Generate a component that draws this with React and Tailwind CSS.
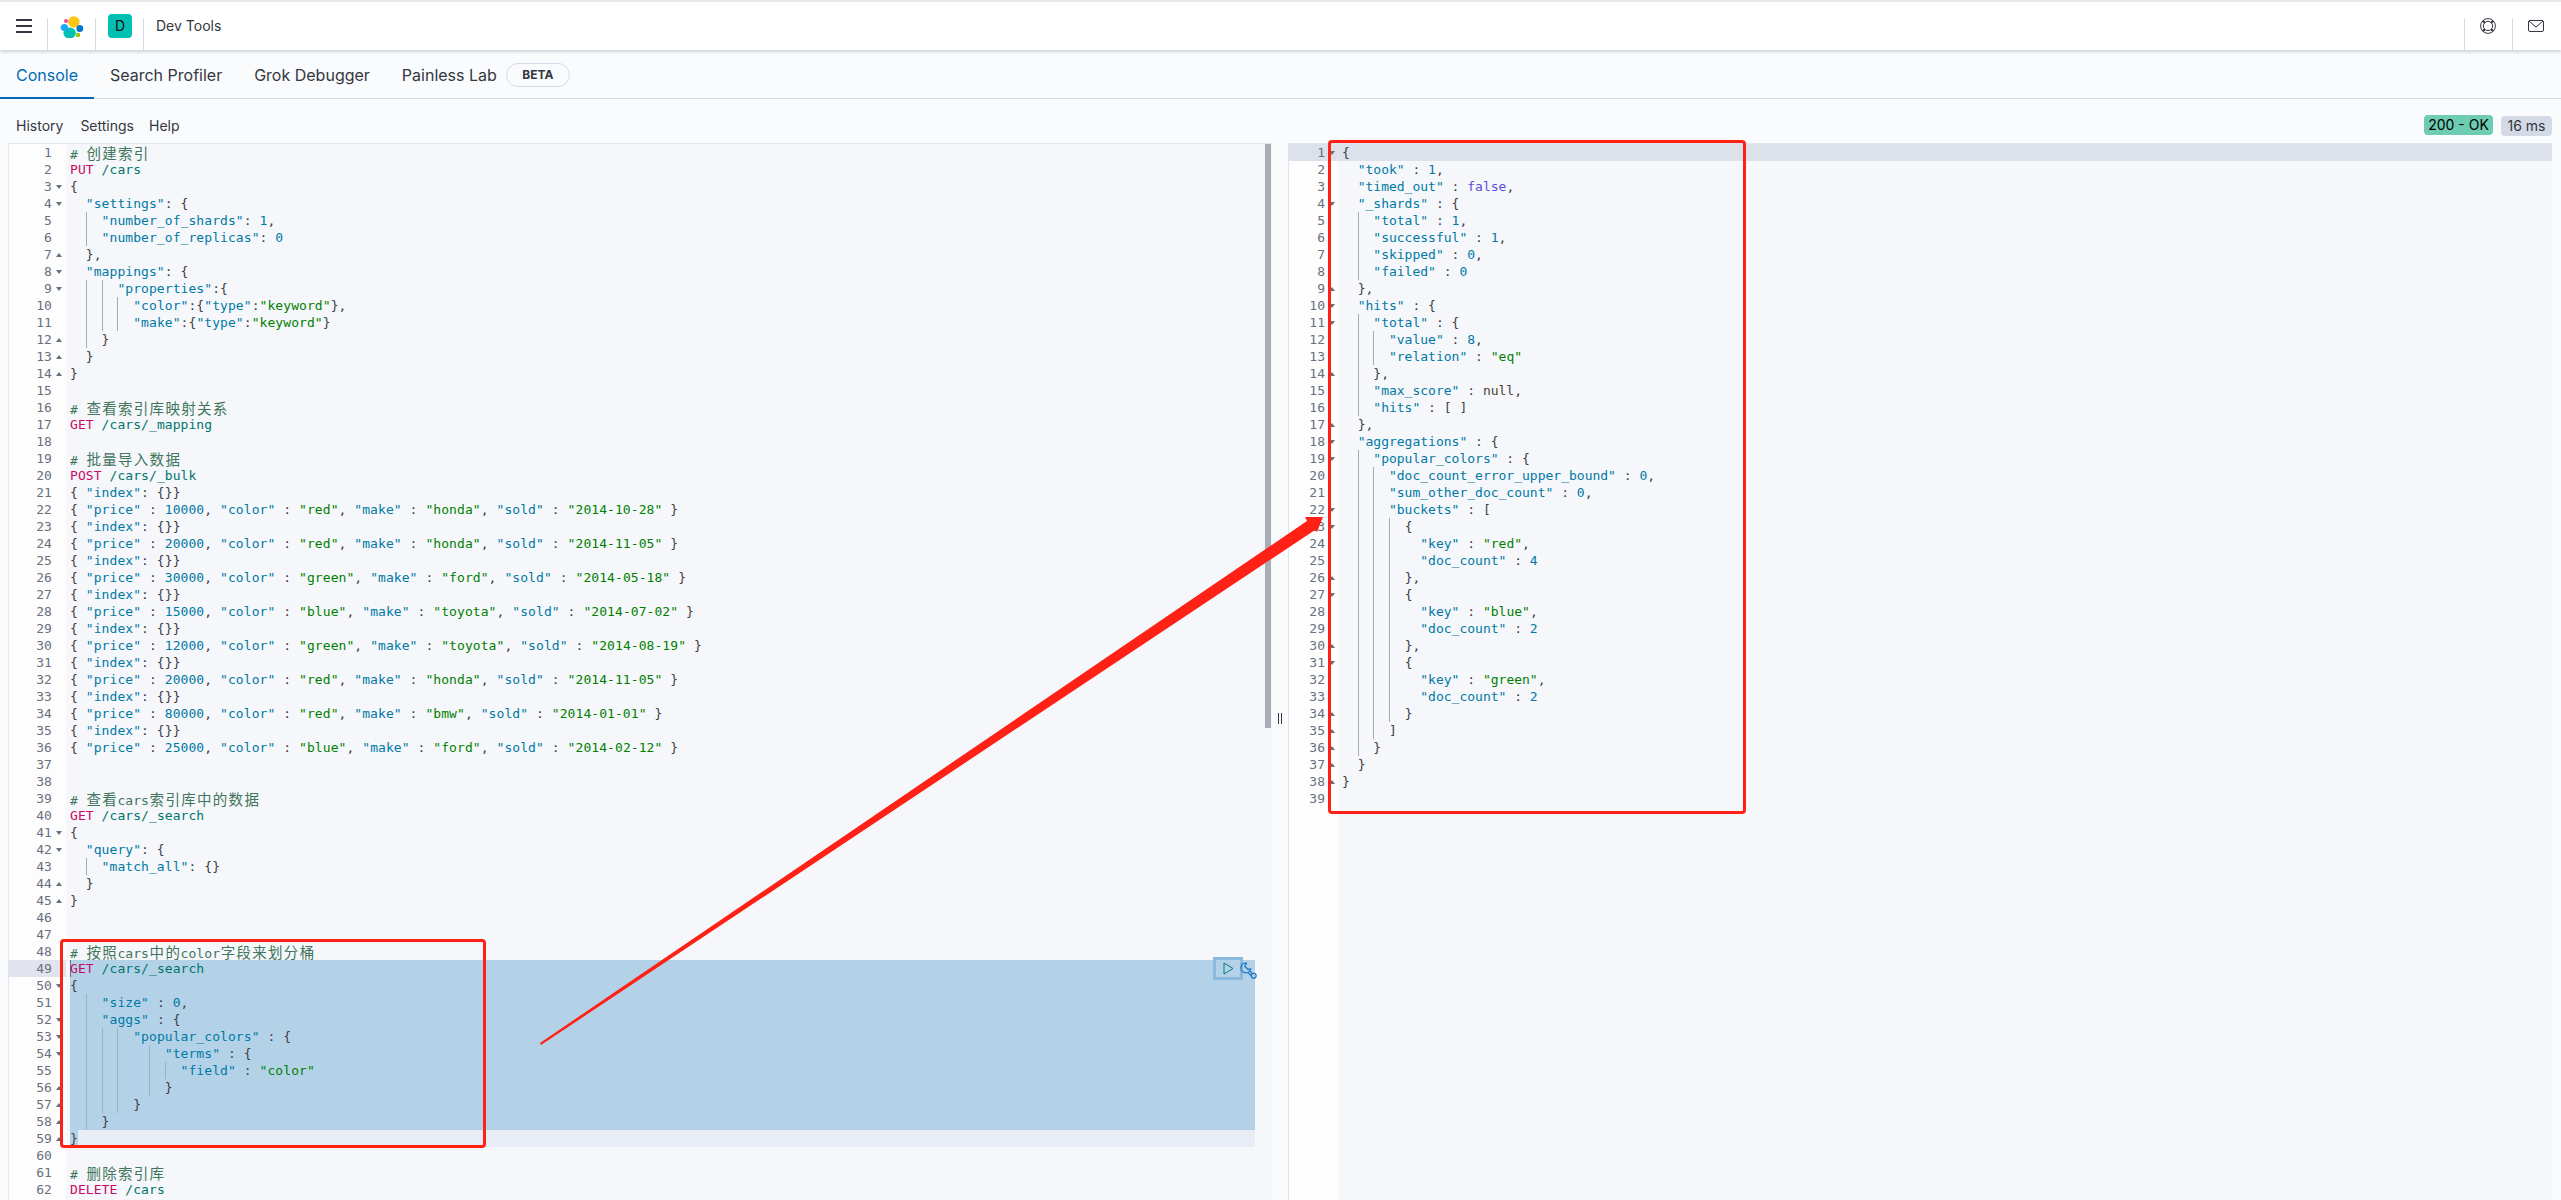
const bulk = [
  ['10000', 'red', 'honda', '2014-10-28'],
  ['20000', 'red', 'honda', '2014-11-05'],
  ['30000', 'green', 'ford', '2014-05-18'],
  ['15000', 'blue', 'toyota', '2014-07-02'],
  ['12000', 'green', 'toyota', '2014-08-19'],
  ['20000', 'red', 'honda', '2014-11-05'],
  ['80000', 'red', 'bmw', '2014-01-01'],
  ['25000', 'blue', 'ford', '2014-02-12'],
].flatMap(([price, color, make, sold]) => [
  '{ "index": {}}',
  `{ "price" : ${price}, "color" : "${color}", "make" : "${make}", "sold" : "${sold}" }`,
]);

const requestLines = [
  '# 创建索引',
  'PUT /cars',
  '{',
  '  "settings": {',
  '    "number_of_shards": 1,',
  '    "number_of_replicas": 0',
  '  },',
  '  "mappings": {',
  '      "properties":{',
  '        "color":{"type":"keyword"},',
  '        "make":{"type":"keyword"}',
  '    }',
  '  }',
  '}',
  '',
  '# 查看索引库映射关系',
  'GET /cars/_mapping',
  '',
  '# 批量导入数据',
  'POST /cars/_bulk',
  ...bulk,
  '',
  '',
  '# 查看cars索引库中的数据',
  'GET /cars/_search',
  '{',
  '  "query": {',
  '    "match_all": {}',
  '  }',
  '}',
  '',
  '',
  '# 按照cars中的color字段来划分桶',
  'GET /cars/_search',
  '{',
  '    "size" : 0,',
  '    "aggs" : {',
  '        "popular_colors" : {',
  '            "terms" : {',
  '              "field" : "color"',
  '            }',
  '        }',
  '    }',
  '}',
  '',
  '# 删除索引库',
  'DELETE /cars',
];

const bucket = (key, count) => [
  '        {',
  `          "key" : "${key}",`,
  `          "doc_count" : ${count}`,
];

const responseLines = [
  '{',
  '  "took" : 1,',
  '  "timed_out" : false,',
  '  "_shards" : {',
  '    "total" : 1,',
  '    "successful" : 1,',
  '    "skipped" : 0,',
  '    "failed" : 0',
  '  },',
  '  "hits" : {',
  '    "total" : {',
  '      "value" : 8,',
  '      "relation" : "eq"',
  '    },',
  '    "max_score" : null,',
  '    "hits" : [ ]',
  '  },',
  '  "aggregations" : {',
  '    "popular_colors" : {',
  '      "doc_count_error_upper_bound" : 0,',
  '      "sum_other_doc_count" : 0,',
  '      "buckets" : [',
  ...bucket('red', 4),
  '        },',
  ...bucket('blue', 2),
  '        },',
  ...bucket('green', 2),
  '        }',
  '      ]',
  '    }',
  '  }',
  '}',
  '',
];

const requestFolds = {
  down: [3, 4, 8, 9, 41, 42, 50, 52, 53, 54],
  up: [7, 12, 13, 14, 44, 45, 56, 57, 58, 59],
};
const responseFolds = {
  down: [1, 4, 10, 11, 18, 19, 22, 23, 27, 31],
  up: [9, 14, 17, 26, 30, 34, 35, 36, 37, 38],
};

// ace leaves a hole in the guides on these lines
const requestGuides = { 54: [2, 4, 6, 10], 55: [2, 4, 6, 10, 12], 56: [2, 4, 6, 10] };
const responseGuides = {
  24: [2, 4, 6], 25: [2, 4, 6],
  28: [2, 4, 6], 29: [2, 4, 6],
  32: [2, 4, 6], 33: [2, 4, 6],
};

const FoldMark = ({ dir }) => {
  if (dir === 'down') {
    return <span className="block w-0 h-0 border-x-[3px] border-x-transparent border-t-[4px] border-t-[#69707d]" />;
  }
  if (dir === 'up') {
    return <span className="block w-0 h-0 border-x-[3px] border-x-transparent border-b-[4px] border-b-[#69707d]" />;
  }
  return null;
};

const tokenClass = (part, next) => {
  if (part.startsWith('"')) return /^\s*:/.test(next) ? 'text-[#0079a5]' : 'text-[#017f01]';
  if (part === 'false') return 'text-[#5a4ee0]';
  if (part === 'null') return 'text-[#4a3f35]';
  return 'text-[#0079a5]';
};

const Cjk = ({ text }) =>
  text.split(/([\u4e00-\u9fff])/).map((part, i) =>
    i % 2 ? (
      <span key={i} className="inline-block w-[15.8px] text-center text-[14.5px] font-['Noto_Sans_CJK_SC',sans-serif]">
        {part}
      </span>
    ) : (
      part
    )
  );

const LineText = ({ text }) => {
  if (text.startsWith('#')) {
    return <span className="text-[#41755c]"><Cjk text={text} /></span>;
  }
  const method = text.match(/^(GET|PUT|POST|DELETE) (.*)$/);
  if (method) {
    return (
      <>
        <span className="text-[#c80a68]">{method[1]}</span>{' '}
        <span className="text-[#00756c]">{method[2]}</span>
      </>
    );
  }
  const parts = text.split(/("[^"]*"|\b\d+\b|\bfalse\b|\bnull\b)/);
  return parts.map((part, i) =>
    i % 2 ? (
      <span key={i} className={tokenClass(part, parts[i + 1])}>{part}</span>
    ) : (
      <span key={i} className="text-[#3f3d42]">{part}</span>
    )
  );
};

const Indent = ({ count, guides }) => {
  const chunks = [];
  for (let col = 0; col < count; col += 2) {
    chunks.push(
      <span
        key={col}
        className={guides.includes(col) ? 'inline-block h-[17px] align-top shadow-[inset_1px_0_0_#a4acb9]' : 'inline-block h-[17px] align-top'}
      >
        {'  '}
      </span>
    );
  }
  return chunks;
};

const Row = ({ n, text, guideMap, rowClass, cursor, partial }) => {
  const indent = text.match(/^ */)[0].length;
  const rest = text.slice(indent);
  const fallback = [];
  for (let col = 2; col < indent; col += 2) fallback.push(col);
  const guides = guideMap[n] || fallback;
  const body = (
    <>
      <Indent count={indent} guides={guides} />
      <LineText text={rest} />
    </>
  );
  return (
    <div className={`h-[17px] ${rowClass} ${cursor ? 'shadow-[inset_1px_0_0_#69707d]' : ''}`}>
      {partial ? <span className="inline-block h-[17px] align-top bg-[#b3d2e8]">{body}</span> : body}
    </div>
  );
};

const Gutter = ({ count, folds, activeLine, activeClass, numClass, width }) => (
  <div className={`${width} shrink-0 bg-[#fdfdfe]`}>
    {Array.from({ length: count }, (_, i) => i + 1).map((n) => (
      <div key={n} className={`flex items-center h-[17px] ${n === activeLine ? activeClass : ''}`}>
        <span className={`${numClass} text-right text-[#69707d]`}>{n}</span>
        <span className="flex-1 flex justify-center">
          <FoldMark dir={folds.down.includes(n) ? 'down' : folds.up.includes(n) ? 'up' : null} />
        </span>
      </div>
    ))}
  </div>
);

const RequestEditor = () => (
  <div className="relative flex w-[1264px] ml-2 h-[1057px] overflow-hidden border-l border-t border-[#e3e7ee] bg-[#f5f7fa] font-['DejaVu_Sans_Mono',monospace] text-[13px] leading-[17px] whitespace-pre tracking-[0.07px]">
    <Gutter
      count={requestLines.length}
      folds={requestFolds}
      activeLine={49}
      activeClass="bg-[#e1e4ec]"
      numClass="w-[43px]"
      width="w-[57px]"
    />
    <div className="w-[1189px] shrink-0 pl-1">
      {requestLines.map((text, i) => {
        const n = i + 1;
        const selected = n >= 49 && n <= 58;
        return (
          <Row
            key={n}
            n={n}
            text={text}
            guideMap={requestGuides}
            rowClass={selected ? 'bg-[#b3d2e8]' : n === 59 ? 'bg-[#e8ecf4]' : ''}
            cursor={n === 49}
            partial={n === 59}
          />
        );
      })}
    </div>
    <div className="ml-[10px] w-[6px] h-[584px] bg-[#a9adb5]" />
    <div className="absolute left-[1204px] top-[813px] w-[30px] h-[23px] border-[3px] border-[#8bb8dd] bg-[#b3d2e8] flex items-center justify-center">
      <svg width="11" height="13" viewBox="0 0 11 13" fill="none">
        <path d="M1 1 L10 6.5 L1 12 Z" stroke="#017d73" strokeWidth="1" />
      </svg>
    </div>
    <svg className="absolute left-[1231px] top-[818px]" width="17" height="17" viewBox="0 0 16 16" fill="none" stroke="#1f7ac4" strokeWidth="1.2">
      <path d="M6 1 A4.6 4.6 0 1 0 10 6.5 L7.6 6.8 L4.6 4.2 Z" />
      <path d="M9.4 8.6 L11.4 10.8 M7.6 10 L10.4 12.9" />
      <circle cx="12.9" cy="12.9" r="2.3" />
    </svg>
  </div>
);

const ResponseEditor = () => (
  <div className="flex w-[1264px] h-[1057px] overflow-hidden border-l border-t border-[#dfe3ea] bg-[#f5f7fa] font-['DejaVu_Sans_Mono',monospace] text-[13px] leading-[17px] whitespace-pre">
    <Gutter
      count={responseLines.length}
      folds={responseFolds}
      activeLine={1}
      activeClass="bg-[#dce1ea]"
      numClass="w-[36px]"
      width="w-[49px]"
    />
    <div className="flex-1 pl-1">
      {responseLines.map((text, i) => (
        <Row
          key={i}
          n={i + 1}
          text={text}
          guideMap={responseGuides}
          rowClass={i === 0 ? 'bg-[#dce1ea] -ml-1 pl-1' : ''}
          cursor={false}
          partial={false}
        />
      ))}
    </div>
  </div>
);

const ElasticLogo = () => (
  <svg width="24" height="24" viewBox="0 0 24 24" className="block">
    <circle cx="13.8" cy="8" r="5.8" fill="#fec514" />
    <ellipse cx="9.6" cy="19" rx="6.2" ry="5.6" fill="#00bfb3" />
    <circle cx="6" cy="7" r="2.1" fill="#f04e98" />
    <ellipse cx="4.4" cy="13.5" rx="3.7" ry="3.6" fill="#1ba9f5" />
    <ellipse cx="19.8" cy="14.5" rx="3.4" ry="3.6" fill="#0077cc" />
    <circle cx="18" cy="21" r="2.3" fill="#93c90e" />
  </svg>
);

const HeaderCell = ({ children }) => (
  <div className="relative w-12 h-12 flex items-center justify-center">
    {children}
    <span className="absolute right-0 bottom-0 w-px h-8 bg-[#d3dae6]" />
  </div>
);

const Tab = ({ label, active, children }) => (
  <div className={`relative flex items-center h-[48px] pt-[2px] px-4 text-base ${active ? 'text-[#006bb4]' : 'text-[#343741]'}`}>
    {label}
    {children}
    {active && <span className="absolute left-0 right-0 bottom-[-1px] h-[2px] bg-[#006bb4]" />}
  </div>
);

export default function App() {
  return (
    <div className="relative h-[1200px] w-full overflow-hidden bg-[#fafbfd] font-['Inter',sans-serif] text-[#343741]">
      <header className="relative z-10 flex items-start h-[50px] border-t-2 border-[#e6e8ec] bg-white shadow-[0_2px_3px_rgba(152,162,179,0.45)]">
        <HeaderCell>
          <span className="flex flex-col gap-1 w-4">
            <span className="h-0.5 bg-[#343741]" />
            <span className="h-0.5 bg-[#343741]" />
            <span className="h-0.5 bg-[#343741]" />
          </span>
        </HeaderCell>
        <HeaderCell>
          <ElasticLogo />
        </HeaderCell>
        <HeaderCell>
          <span className="flex items-center justify-center w-6 h-6 rounded bg-[#00bfb3] text-sm text-[#111]">D</span>
        </HeaderCell>
        <span className="ml-3 mt-[14px] text-sm leading-5">Dev Tools</span>
        <div className="ml-auto flex mr-px">
          <div className="relative w-12 h-12 flex items-center justify-center">
            <span className="absolute left-0 bottom-0 w-px h-8 bg-[#d3dae6]" />
            <svg width="16" height="16" viewBox="0 0 16 16" fill="none" stroke="#343741">
              <circle cx="8" cy="8" r="7.4" />
              <circle cx="8" cy="8" r="4.6" />
              <path d="M2.8 2.8 L4.8 4.8 M13.2 2.8 L11.2 4.8 M2.8 13.2 L4.8 11.2 M13.2 13.2 L11.2 11.2" strokeWidth="2" />
            </svg>
          </div>
          <div className="relative w-12 h-12 flex items-center justify-center">
            <span className="absolute left-0 bottom-0 w-px h-8 bg-[#d3dae6]" />
            <svg width="16" height="12" viewBox="0 0 16 12" fill="none">
              <rect x=".5" y=".5" width="15" height="11" rx="1.5" stroke="#343741" />
              <path d="M1 1 L8 7 L15 1" stroke="#343741" />
            </svg>
          </div>
        </div>
      </header>

      <nav className="flex border-b border-[#d3dae6]">
        <Tab label="Console" active />
        <Tab label="Search Profiler" />
        <Tab label="Grok Debugger" />
        <Tab label="Painless Lab">
          <span className="ml-[9px] flex items-center justify-center w-16 h-6 rounded-full border border-[#d3dae6] text-xs font-bold">
            BETA
          </span>
        </Tab>
      </nav>

      <div className="flex items-center h-[44px] pl-4 pr-[9px] pt-[10px] text-sm">
        <span>History</span>
        <span className="ml-[17px]">Settings</span>
        <span className="ml-[15px]">Help</span>
        <span className="ml-auto flex items-center justify-center w-[69px] h-5 rounded-sm bg-[#6dccb1] text-[#000] -mt-[2px]">200 - OK</span>
        <span className="ml-2 flex items-center justify-center w-[51px] h-5 rounded-sm bg-[#d3dae6]">16 ms</span>
      </div>

      <div className="flex items-start">
        <RequestEditor />
        <div className="w-4 flex justify-center gap-[2px] pt-[570px]">
          <span className="w-px h-[11px] bg-[#343741]" />
          <span className="w-px h-[11px] bg-[#343741]" />
        </div>
        <ResponseEditor />
      </div>

      {/* annotations drawn over the screenshot */}
      <div className="absolute left-[60px] top-[939px] w-[426px] h-[209px] border-[3px] border-[#ff2116] rounded-sm" />
      <div className="absolute left-[1328px] top-[140px] w-[418px] h-[674px] border-[3px] border-[#ff2116] rounded-sm" />
      <svg className="absolute left-0 top-0 pointer-events-none" width="2561" height="1200">
        <polygon points="540,1043 1307,521 1305,517 1323,517 1317,532 1315,530 541,1045" fill="#ff2116" />
      </svg>
    </div>
  );
}
